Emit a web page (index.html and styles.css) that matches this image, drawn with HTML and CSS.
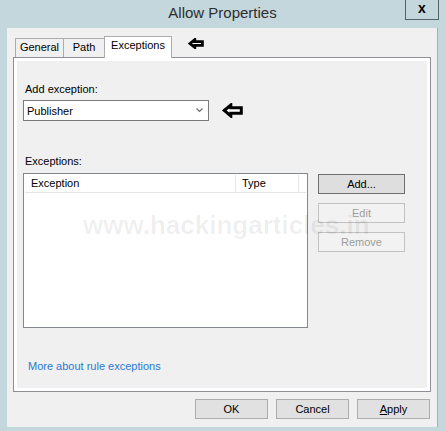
FILE: index.html
```html
<!DOCTYPE html>
<html lang="en">
<head>
    <meta charset="UTF-8">
    <meta name="viewport" content="width=device-width, initial-scale=1.0">
    <title>Allow Properties</title>
    <link rel="stylesheet" href="styles.css">
</head>
<body>
    <div class="window">
        <!-- Title bar -->
        <div class="titlebar">
            <span></span>
            <span class="title">Allow Properties</span>
            <button class="close">x</button>
        </div>

        <div class="client">
            <!-- Tabs -->
            <div class="tabs">
                <div class="tab">General</div>
                <div class="tab">Path</div>
                <div class="tab active">Exceptions</div>
                <svg class="pointer pointer-small" width="16" height="11" viewBox="0 0 16 11">
                    <polygon points="2,5.5 6.8,1.6 6.8,3.6 14.4,3.6 14.4,7.4 6.8,7.4 6.8,9.4" fill="#fff" stroke="#000" stroke-width="2.8" stroke-linejoin="miter"/>
                </svg>
            </div>

            <!-- Tab page -->
            <div class="panel">
                <div class="caption">Add exception:</div>
                <div class="combo-row">
                    <div class="combo">
                        <span>Publisher</span>
                        <svg width="7" height="5" viewBox="0 0 7 5">
                            <polyline points="0.5,0.5 3.5,3.5 6.5,0.5" fill="none" stroke="#6b6b6b" stroke-width="1.2"/>
                        </svg>
                    </div>
                    <svg class="pointer pointer-big" width="21" height="15" viewBox="0 0 21 15">
                        <polygon points="2.2,7.5 8.8,2 8.8,4.8 19.3,4.8 19.3,10.2 8.8,10.2 8.8,13" fill="#fff" stroke="#000" stroke-width="3" stroke-linejoin="miter"/>
                    </svg>
                </div>

                <div class="caption caption-list">Exceptions:</div>
                <div class="list-row">
                    <div class="list">
                        <div class="list-head">
                            <div class="col col-name">Exception</div>
                            <div class="col col-type">Type</div>
                        </div>
                    </div>
                    <div class="side-buttons">
                        <button class="btn btn-default">Add...</button>
                        <button class="btn" disabled>Edit</button>
                        <button class="btn" disabled>Remove</button>
                    </div>
                </div>

                <a class="more" href="#">More about rule exceptions</a>
            </div>

            <!-- Dialog buttons -->
            <div class="dialog-buttons">
                <button class="btn btn-dialog">OK</button>
                <button class="btn btn-dialog">Cancel</button>
                <button class="btn btn-dialog"><u>A</u>pply</button>
            </div>
        </div>

        <div class="watermark">www.hackingarticles.in</div>
    </div>
</body>
</html>
```

FILE: styles.css
```css
/* General */
body {
    margin: 0;
    font-family: "Liberation Sans", Arial, sans-serif;
    font-size: 11px;
    color: #000;
}

.window {
    position: relative;
    width: 445px;
    height: 431px;
    background-color: #c3d7dd;
    overflow: hidden;
}

/* Title bar */
.titlebar {
    height: 28px;
    display: grid;
    grid-template-columns: 1fr auto 1fr;
}

.title {
    font-size: 15px;
    line-height: 18px;
    padding-top: 4px;
    color: #2e2e2e;
}

.close {
    justify-self: end;
    align-self: start;
    margin-right: 6px;
    width: 34px;
    height: 20px;
    padding: 0 0 3px;
    border: 1px solid #56606a;
    border-top: 0;
    background: transparent;
    font-family: "Liberation Sans", Arial, sans-serif;
    font-weight: bold;
    font-size: 14px;
    line-height: 14px;
    color: #000;
}

/* Client area */
.client {
    box-sizing: border-box;
    width: 431px;
    height: 399px;
    margin-left: 7px;
    padding: 8px 6px 0 6px;
    background-color: #f0f0f0;
    border-right: 1px solid #a3b1b6;
}

/* Tabs */
.tabs {
    position: relative;
    z-index: 1;
    display: flex;
    align-items: flex-end;
    height: 21px;
    padding-left: 2px;
}

.tab {
    box-sizing: border-box;
    height: 19px;
    line-height: 17px;
    text-align: center;
    border: 1px solid #acacac;
    border-bottom: 0;
    background-color: #f0f0f0;
}

.tab:nth-child(1) { width: 49px; }
.tab:nth-child(2) { width: 42px; margin-left: -1px; }

.tab.active {
    width: 68px;
    height: 22px;
    margin-left: -1px;
    margin-bottom: -1px;
    background-color: #fff;
    align-self: flex-end;
}

.pointer-small {
    margin-left: 16px;
    margin-bottom: 8px;
}

/* Tab page */
.panel {
    box-sizing: border-box;
    height: 335px;
    padding-left: 9px;
    border: 1px solid #8e9096;
    background-color: #f0f0f0;
    box-shadow: inset 0 0 0 3px #fff;
    display: flex;
    flex-direction: column;
    align-items: flex-start;
}

.caption {
    line-height: 15px;
    margin-top: 24px;
    padding-left: 2px;
}

.caption-list {
    margin-top: 33px;
}

.combo-row {
    display: flex;
    align-items: center;
    margin-top: 3px;
}

.combo {
    box-sizing: border-box;
    width: 186px;
    height: 21px;
    padding: 0 5px 0 3px;
    border: 1px solid #7a7a7a;
    background-color: #fff;
    display: flex;
    align-items: center;
    justify-content: space-between;
}

.pointer-big {
    margin-left: 13px;
}

/* List */
.list-row {
    display: flex;
    align-items: flex-start;
    margin-top: 4px;
}

.list {
    box-sizing: border-box;
    width: 285px;
    height: 155px;
    border: 1px solid #828790;
    background-color: #fff;
    padding: 1px;
}

.list-head {
    display: flex;
    height: 18px;
    width: 281px;
    box-sizing: border-box;
    border-bottom: 1px solid #e5e5e5;
}

.col {
    box-sizing: border-box;
    line-height: 17px;
    padding-left: 6px;
    border-right: 1px solid #e5e5e5;
}

.col-name { width: 211px; }
.col-type { width: 63px; }

.side-buttons {
    display: flex;
    flex-direction: column;
    gap: 9px;
    margin-left: 10px;
    margin-top: 1px;
}

/* Buttons */
.btn {
    box-sizing: border-box;
    width: 87px;
    height: 20px;
    padding: 0;
    font-family: "Liberation Sans", Arial, sans-serif;
    font-size: 11px;
    color: #000;
    border: 1px solid #adadad;
    background-color: #e1e1e1;
}

.btn-default {
    border-color: #6f6f6f;
    background-color: #dedede;
}

.btn:disabled {
    border-color: #c2c2c2;
    background-color: #f2f2f2;
    color: #9c9c9c;
}

.more {
    margin-top: 31px;
    padding-left: 5px;
    line-height: 15px;
    color: #2a79d4;
    text-decoration: none;
}

.dialog-buttons {
    display: flex;
    justify-content: flex-end;
    gap: 8px;
    margin-top: 7px;
    margin-right: 1px;
}

.btn-dialog {
    width: 73px;
}

/* Watermark */
.watermark {
    position: absolute;
    left: 83px;
    top: 210px;
    font-size: 26px;
    line-height: 30px;
    font-weight: bold;
    color: rgba(0, 0, 0, 0.065);
    pointer-events: none;
}
```
